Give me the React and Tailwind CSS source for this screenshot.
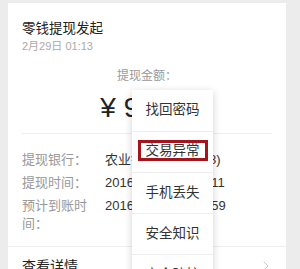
import { ChevronRight } from 'lucide-react'

const rows = [
  { label: '提现银行：', value: '农业银行(尾号6688)' },
  { label: '提现时间：', value: '2016-02-29 01:13:11' },
  { label: '预计到账时间：', value: '2016-03-01 23:59:59' },
]

const menu = ['找回密码', '交易异常', '手机丢失', '安全知识', '安全防护']

export default function App() {
  return (
    <div
      className="relative h-screen overflow-hidden bg-[#ececec] pt-[3px] pl-[8px]"
      style={{ fontFamily: '"Liberation Sans", "Noto Sans CJK SC", sans-serif' }}
    >
      <div className="w-[278px] bg-white">
        <div className="px-[14px] pt-[16px]">
          <div className="text-[13.5px] leading-[20px] text-[#222]">零钱提现发起</div>
          <div className="text-[11px] leading-[14px] text-[#aaa]">2月29日 01:13</div>
          <div className="mt-[15px] text-center text-[12px] leading-[16px] text-[#999]">提现金额：</div>
          <div className="mt-[7px] text-center text-[28px] font-light leading-[34px] text-[#222]">
            ¥ 90.00
          </div>
          <div className="mt-[8px] border-t border-[#eee]" />
          <div className="flex flex-col gap-[5px] pt-[17px] pb-[13px]">
            {rows.map((r) => (
              <div key={r.label} className="flex text-[13px] leading-[18px]">
                <div className="w-[67px] shrink-0 text-[#999]">{r.label}</div>
                <div className="ml-[16px] text-[#333]">{r.value}</div>
              </div>
            ))}
          </div>
        </div>
        <div className="flex items-center justify-between border-t border-[#eee] pl-[14px] pr-[12px] pt-[9px] pb-[10px]">
          <span className="text-[14px] leading-[20px] text-[#222]">查看详情</span>
          <ChevronRight size={16} strokeWidth={1.2} className="text-[#bbb]" />
        </div>
      </div>

      <div className="absolute left-[132px] top-[90px] w-[81px] bg-white shadow-[0_2px_8px_rgba(0,0,0,0.18)]">
        {menu.map((m, i) => (
          <div
            key={m}
            className={`flex h-[41px] items-center justify-center text-[13.5px] text-[#333] ${i > 0 ? 'border-t border-[#eee]' : ''}`}
          >
            {i === 1 ? (
              <span className="mb-[3px] border-[3px] border-[#a3141c] px-[5px] leading-[15px]">{m}</span>
            ) : (
              <span>{m}</span>
            )}
          </div>
        ))}
      </div>
    </div>
  )
}
